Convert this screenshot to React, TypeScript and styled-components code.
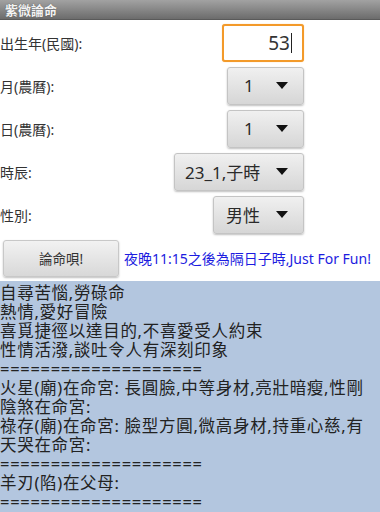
import styled, { createGlobalStyle } from "styled-components";

const GlobalStyle = createGlobalStyle`
    html, body {
        margin: 0;
        padding: 0;
        background: #ffffff;
    }
    body {
        font-family: "Noto Sans", "Noto Sans CJK TC", sans-serif;
        overflow: hidden;
    }
`;

const resultLines = [
    "自尋苦惱,勞碌命",
    "熱情,愛好冒險",
    "喜覓捷徑以達目的,不喜愛受人約束",
    "性情活潑,談吐令人有深刻印象",
    "====================",
    "火星(廟)在命宮: 長圓臉,中等身材,亮壯暗瘦,性剛",
    "陰煞在命宮:",
    "祿存(廟)在命宮: 臉型方圓,微高身材,持重心慈,有",
    "天哭在命宮:",
    "====================",
    "羊刃(陷)在父母:",
    "====================",
];

const Arrow = () => (
    <svg width="12" height="7" viewBox="0 0 12 7">
        <path d="M0 0 L12 0 L6 7 Z" fill="#111" />
    </svg>
);

export default function App() {
    return (
        <Screen>
            <GlobalStyle />
            <TitleBar>紫微論命</TitleBar>
            <Form>
                <Row>
                    <Label>出生年(民國):</Label>
                    <YearInput>
                        53<Caret />
                    </YearInput>
                </Row>
                <Row>
                    <Label>月(農曆):</Label>
                    <Spinner $width={77}>
                        <span>1</span>
                        <Arrow />
                    </Spinner>
                </Row>
                <Row>
                    <Label>日(農曆):</Label>
                    <Spinner $width={77}>
                        <span>1</span>
                        <Arrow />
                    </Spinner>
                </Row>
                <Row>
                    <Label>時辰:</Label>
                    <Spinner $width={130} $pad={10}>
                        <span>23_1,子時</span>
                        <Arrow />
                    </Spinner>
                </Row>
                <Row>
                    <Label>性別:</Label>
                    <Spinner $width={91} $pad={12}>
                        <span>男性</span>
                        <Arrow />
                    </Spinner>
                </Row>
                <ActionRow>
                    <GoButton>論命唄!</GoButton>
                    <Hint>夜晚11:15之後為隔日子時,Just For Fun!</Hint>
                </ActionRow>
            </Form>
            <Result>
                {resultLines.map((line, i) => (
                    <ResultLine key={i}>{line}</ResultLine>
                ))}
            </Result>
        </Screen>
    );
}

const Screen = styled.div`
    width: 380px;
    height: 512px;
    display: flex;
    flex-direction: column;
    overflow: hidden;
`;

const TitleBar = styled.div`
    height: 20px;
    flex-shrink: 0;
    background: linear-gradient(#a2a2a2, #6c6c6c);
    border-bottom: 1px solid #5a5a5a;
    color: #f4f4f4;
    font-size: 13px;
    font-weight: 700;
    line-height: 20px;
    padding-left: 5px;
    text-shadow: 0 0 1px #444;
    box-sizing: border-box;
`;

const Form = styled.div`
    width: 304px;
    display: flex;
    flex-direction: column;
    padding-top: 1px;
`;

const Row = styled.div`
    height: 43px;
    display: flex;
    align-items: center;
    justify-content: space-between;
`;

const Label = styled.span`
    font-size: 14px;
    color: #333;
`;

const YearInput = styled.div`
    width: 82px;
    height: 38px;
    box-sizing: border-box;
    border: 2px solid #f39a2a;
    border-radius: 3px;
    box-shadow: 0 0 1px #f7b86a;
    background: #fff;
    display: flex;
    align-items: center;
    justify-content: flex-end;
    padding-right: 10px;
    font-size: 19px;
    color: #333;
`;

const Caret = styled.span`
    width: 1px;
    height: 20px;
    background: #222;
    margin-left: 1px;
`;

const Spinner = styled.div<{ $width: number; $pad?: number }>`
    width: ${(p) => p.$width}px;
    height: 38px;
    box-sizing: border-box;
    border: 1px solid #c4c4c4;
    border-radius: 3px;
    background: linear-gradient(#f0f0f0, #d6d6d6);
    box-shadow: 0 1px 2px rgba(0, 0, 0, 0.25);
    display: flex;
    align-items: center;
    justify-content: space-between;
    padding: 0 15px 0 ${(p) => p.$pad ?? 16}px;
    font-size: 17px;
    color: #2a2a2a;
`;

const ActionRow = styled.div`
    height: 44px;
    display: flex;
    align-items: center;
    padding-left: 3px;
    gap: 5px;
    width: 380px;
`;

const GoButton = styled.div`
    width: 116px;
    height: 37px;
    flex-shrink: 0;
    box-sizing: border-box;
    border: 1px solid #c8c8c8;
    border-radius: 3px;
    background: linear-gradient(#f2f2f2, #d8d8d8);
    box-shadow: 0 1px 2px rgba(0, 0, 0, 0.25);
    display: flex;
    align-items: center;
    justify-content: center;
    font-size: 13.5px;
    color: #333;
`;

const Hint = styled.span`
    font-size: 14px;
    color: #1c1ce0;
    white-space: nowrap;
`;

const Result = styled.div`
    flex: 1;
    margin-top: 1px;
    background: #b3c6df;
    padding-top: 2px;
    overflow: hidden;
`;

const ResultLine = styled.div`
    font-size: 16.5px;
    line-height: 19px;
    height: 19px;
    color: #222;
    white-space: nowrap;
    letter-spacing: 0.7px;
`;
